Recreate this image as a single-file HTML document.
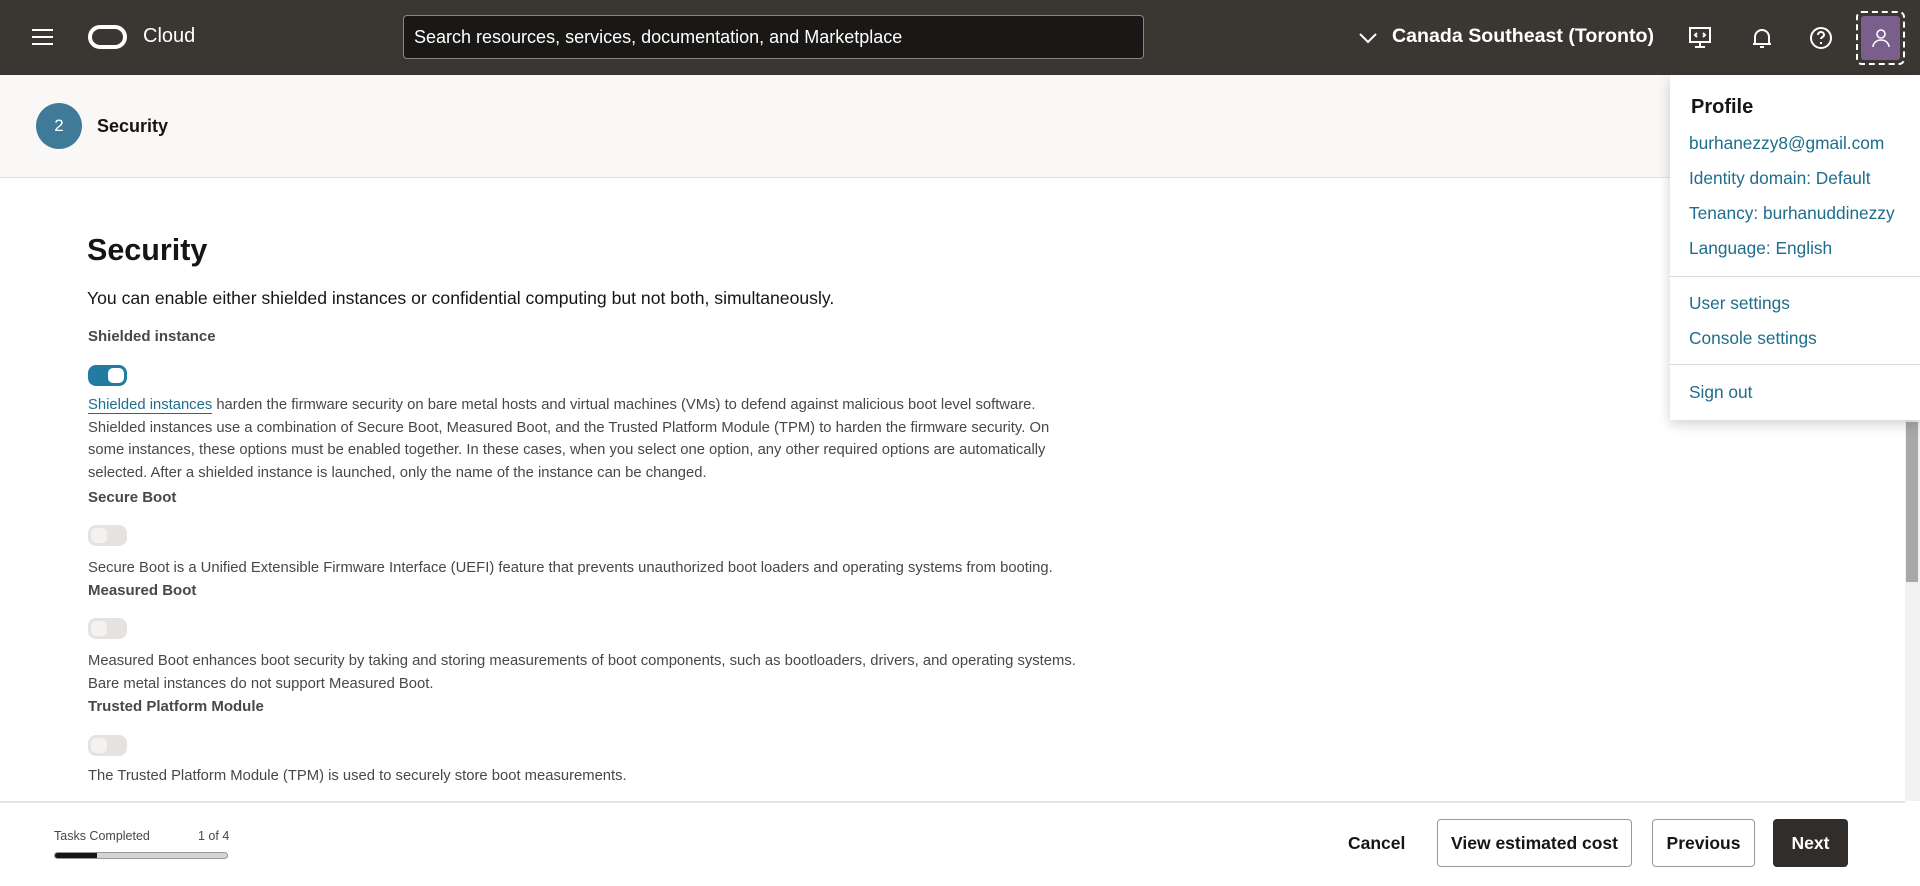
<!DOCTYPE html>
<html><head><meta charset="utf-8"><style>
*{box-sizing:border-box;margin:0;padding:0}
body{width:1920px;height:886px;overflow:hidden;position:relative;background:#fff;font-family:"Liberation Sans",sans-serif;color:#161513}
.a{position:absolute;white-space:nowrap}
.hdr{position:absolute;left:0;top:0;width:1920px;height:75px;background:#3a3632}
.sub{position:absolute;left:0;top:75px;width:1920px;height:103px;background:#f9f8f6;border-bottom:1px solid #e2e0dd}
.desc{font-size:14.8px;color:#4a4744;line-height:22.7px}
.lbl{font-size:15px;font-weight:bold;color:#4a4744}
.tg{position:absolute;left:88px;width:39px;height:21px;border-radius:8px;background:#e4e3e1}
.tg i{position:absolute;left:3px;top:3px;width:16px;height:15px;border-radius:5px;background:#f3f2f0}
.tg.on{background:#227ba0}
.tg.on i{left:20px;background:#fff}
.ft{position:absolute;left:0;top:801px;width:1905px;height:85px;background:#fff;border-top:2px solid #e6e4e1}
.btn{position:absolute;top:819px;height:48px;border:1px solid #9a9794;border-radius:4px;font-size:17.5px;font-weight:bold;display:flex;align-items:center;justify-content:center;color:#161513}
.dd{position:absolute;left:1670px;top:75px;width:250px;height:345px;background:#fff;box-shadow:0 4px 12px rgba(0,0,0,.18)}
.dd .l{position:absolute;left:19px;font-size:17.3px;color:#1e6d8c;white-space:nowrap}
.sep{position:absolute;left:0;width:250px;height:1px;background:#dcdad7}
</style></head><body>
<div class="hdr">
 <div class="a" style="left:32px;top:29px;width:21px;height:2px;background:#fff;box-shadow:0 7px 0 #fff,0 14px 0 #fff"></div>
 <div class="a" style="left:88px;top:25px;width:39px;height:24px;border:4px solid #fff;border-radius:12px"></div>
 <div class="a" style="left:143px;top:25px;color:#fff;font-size:20px">Cloud</div>
 <div class="a" style="left:403px;top:15px;width:741px;height:44px;background:#1a1816;border:1px solid #8a8580;border-radius:4px;color:#fff;font-size:18px;padding:11px 10px">Search resources, services, documentation, and Marketplace</div>
 <svg class="a" style="left:1358px;top:31px" width="20" height="14"><path d="M2 3l8 8 8-8" stroke="#fff" stroke-width="2" fill="none"/></svg>
 <div class="a" style="left:1392px;top:25px;color:#fff;font-size:19.6px;font-weight:bold">Canada Southeast (Toronto)</div>
 <svg class="a" style="left:1688px;top:26px" width="24" height="24" fill="none" stroke="#fff" stroke-width="2"><rect x="2" y="2" width="20" height="14"/><path d="M12 16v5M7 21h10M9 7l-2 2 2 2M15 7l2 2-2 2"/></svg>
 <svg class="a" style="left:1750px;top:26px" width="24" height="24" fill="none" stroke="#fff" stroke-width="2"><path d="M5 18V11a7 7 0 0114 0v7zM3 18h18M10 21h4"/></svg>
 <svg class="a" style="left:1809px;top:26px" width="24" height="24" fill="none" stroke="#fff" stroke-width="2"><circle cx="12" cy="12" r="10"/><path d="M9 9a3 3 0 116 0c0 2-3 2-3 4M12 16v2"/></svg>
 <div class="a" style="left:1856px;top:11px;width:49px;height:54px;border:2px dashed #fff;border-radius:6px;padding:3px"><div style="width:100%;height:100%;background:#7a5e8c;border-radius:3px"></div></div>
 <svg class="a" style="left:1870px;top:27px" width="22" height="22" fill="none" stroke="#fff" stroke-width="1.6"><circle cx="11" cy="7" r="4"/><path d="M3 20a8 7 0 0116 0"/></svg>
</div>
<div class="sub">
 <div class="a" style="left:36px;top:28px;width:46px;height:46px;border-radius:50%;background:#3f7b98;color:#fff;font-size:17px;text-align:center;line-height:46px">2</div>
 <div class="a" style="left:97px;top:41px;font-size:18px;font-weight:bold">Security</div>
</div>
<div class="a" style="left:87px;top:233px;font-size:30.5px;font-weight:bold">Security</div>
<div class="a" style="left:87px;top:288px;font-size:17.6px">You can enable either shielded instances or confidential computing but not both, simultaneously.</div>
<div class="a lbl" style="left:88px;top:328px">Shielded instance</div>
<div class="tg on" style="top:365px"><i></i></div>
<div class="a desc" style="left:88px;top:394px"><span style="color:#1e6d8c;border-bottom:1px solid #1e6d8c">Shielded instances</span> harden the firmware security on bare metal hosts and virtual machines (VMs) to defend against malicious boot level software.<br>Shielded instances use a combination of Secure Boot, Measured Boot, and the Trusted Platform Module (TPM) to harden the firmware security. On<br>some instances, these options must be enabled together. In these cases, when you select one option, any other required options are automatically<br>selected. After a shielded instance is launched, only the name of the instance can be changed.</div>
<div class="a lbl" style="left:88px;top:489px">Secure Boot</div>
<div class="tg" style="top:525px"><i></i></div>
<div class="a desc" style="left:88px;top:557px">Secure Boot is a Unified Extensible Firmware Interface (UEFI) feature that prevents unauthorized boot loaders and operating systems from booting.</div>
<div class="a lbl" style="left:88px;top:582px">Measured Boot</div>
<div class="tg" style="top:618px"><i></i></div>
<div class="a desc" style="left:88px;top:650px">Measured Boot enhances boot security by taking and storing measurements of boot components, such as bootloaders, drivers, and operating systems.<br>Bare metal instances do not support Measured Boot.</div>
<div class="a lbl" style="left:88px;top:698px">Trusted Platform Module</div>
<div class="tg" style="top:735px"><i></i></div>
<div class="a desc" style="left:88px;top:765px">The Trusted Platform Module (TPM) is used to securely store boot measurements.</div>
<div class="ft">
 <div class="a" style="left:54px;top:26px;font-size:12.5px;color:#4a4744">Tasks Completed</div>
 <div class="a" style="left:198px;top:26px;font-size:12.5px;color:#4a4744">1 of 4</div>
 <div class="a" style="left:54px;top:49px;width:174px;height:7px;background:#d6d4d1;border:1px solid #999;border-radius:4px;overflow:hidden"><div style="width:42px;height:100%;background:#161513"></div></div>
</div>
<div class="a" style="left:1348px;top:833px;font-size:17.5px;font-weight:bold">Cancel</div>
<div class="btn" style="left:1437px;width:195px">View estimated cost</div>
<div class="btn" style="left:1652px;width:103px">Previous</div>
<div class="btn" style="left:1773px;width:75px;background:#312d2a;border-color:#312d2a;color:#fff">Next</div>
<div class="a" style="left:1905px;top:75px;width:15px;height:726px;background:#f1f1f1"></div>
<div class="a" style="left:1906px;top:422px;width:12px;height:160px;background:#a8a8a8"></div>
<div class="dd">
 <div class="a" style="left:21px;top:21px;font-size:20px;font-weight:bold">Profile</div>
 <div class="l" style="top:58px">burhanezzy8@gmail.com</div>
 <div class="l" style="top:93px">Identity domain: Default</div>
 <div class="l" style="top:128px">Tenancy: burhanuddinezzy</div>
 <div class="l" style="top:163px">Language: English</div>
 <div class="sep" style="top:201px"></div>
 <div class="l" style="top:218px">User settings</div>
 <div class="l" style="top:253px">Console settings</div>
 <div class="sep" style="top:289px"></div>
 <div class="l" style="top:307px">Sign out</div>
</div>
</body></html>
